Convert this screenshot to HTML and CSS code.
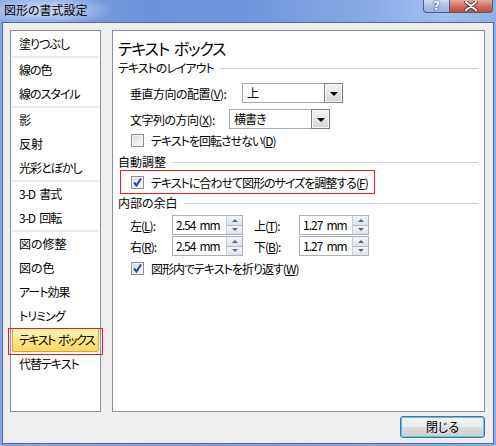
FILE: index.html
```html
<!DOCTYPE html>
<html lang="ja">
<head>
<meta charset="utf-8">
<title>図形の書式設定</title>
<link rel="stylesheet" href="styles.css">
</head>
<body>
<div class="window">
  <div class="titlebar">
    <span class="title">図形の書式設定</span>
    <div class="caption-btns">
      <span class="cb help">?</span>
      <span class="cb close"><svg width="14" height="10" viewBox="0 0 14 10"><path d="M2 1 L12 9 M12 1 L2 9" stroke="#3a2a2a" stroke-width="3.6" stroke-linecap="round"/><path d="M2 1 L12 9 M12 1 L2 9" stroke="#ffffff" stroke-width="2.2" stroke-linecap="round"/></svg></span>
    </div>
  </div>
  <div class="client">
    <ul class="cat-list">
      <li class="item">塗りつぶし</li>
      <li class="sep"></li>
      <li class="item">線の色</li>
      <li class="item">線のスタイル</li>
      <li class="sep"></li>
      <li class="item kanji">影</li>
      <li class="item kanji">反射</li>
      <li class="item">光彩とぼかし</li>
      <li class="sep"></li>
      <li class="item">3-D 書式</li>
      <li class="item">3-D 回転</li>
      <li class="sep"></li>
      <li class="item kanji">図の修整</li>
      <li class="item kanji">図の色</li>
      <li class="item">アート効果</li>
      <li class="item">トリミング</li>
      <li class="item selected">テキスト ボックス</li>
      <li class="item">代替テキスト</li>
    </ul>
    <section class="panel">
      <h1 class="heading">テキスト ボックス</h1>
      <div class="group-title gt1">テキストのレイアウト</div>
      <div class="row row-c1">
        <span class="lbl lbl-v">垂直方向の配置(<u>V</u>):</span>
        <div class="combo"><span class="combo-text">上</span><span class="combo-btn"><i class="tri"></i></span></div>
      </div>
      <div class="row row-c2">
        <span class="lbl lbl-x">文字列の方向(<u>X</u>):</span>
        <div class="combo"><span class="combo-text">横書き</span><span class="combo-btn"><i class="tri"></i></span></div>
      </div>
      <div class="check-row cr1">
        <span class="chk"></span>
        <span>テキストを回転させない(<u>D</u>)</span>
      </div>
      <div class="group-title gt2 kanji">自動調整</div>
      <div class="annot">
        <span class="chk checked"><svg width="11" height="11" viewBox="0 0 11 11"><path d="M2 5.5 L4.5 8.5 L9 1.5" fill="none" stroke="#2348a0" stroke-width="2"/></svg></span>
        <span>テキストに合わせて図形のサイズを調整する(<u>F</u>)</span>
      </div>
      <div class="group-title gt3 kanji">内部の余白</div>
      <div class="row spin-row sr1">
        <span class="lbl lbl-a">左(<u>L</u>):</span>
        <div class="spin s1"><span class="spin-text">2.54 mm</span><span class="spin-btns"><span class="sb up"></span><span class="sb down"></span></span></div>
        <span class="lbl lbl-b">上(<u>T</u>):</span>
        <div class="spin s2"><span class="spin-text">1.27 mm</span><span class="spin-btns"><span class="sb up"></span><span class="sb down"></span></span></div>
      </div>
      <div class="row spin-row sr2">
        <span class="lbl lbl-a">右(<u>R</u>):</span>
        <div class="spin s1"><span class="spin-text">2.54 mm</span><span class="spin-btns"><span class="sb up"></span><span class="sb down"></span></span></div>
        <span class="lbl lbl-b">下(<u>B</u>):</span>
        <div class="spin s2"><span class="spin-text">1.27 mm</span><span class="spin-btns"><span class="sb up"></span><span class="sb down"></span></span></div>
      </div>
      <div class="check-row cr3">
        <span class="chk checked"><svg width="11" height="11" viewBox="0 0 11 11"><path d="M2 5.5 L4.5 8.5 L9 1.5" fill="none" stroke="#2348a0" stroke-width="2"/></svg></span>
        <span>図形内でテキストを折り返す(<u>W</u>)</span>
      </div>
    </section>
    <div class="footer">
      <button class="btn">閉じる</button>
    </div>
  </div>
</div>
</body>
</html>
```
FILE: styles.css
```css
* { box-sizing: border-box; }
html, body { margin: 0; padding: 0; }
body {
  font-family: "Noto Sans CJK JP", "Noto Sans", sans-serif;
  font-size: 12px;
  color: #000;
  font-feature-settings: "palt";
  letter-spacing: -1px;
  word-spacing: 2.5px;
  background: #fff;
}
.kanji { letter-spacing: 0; }
u { text-decoration: underline; text-underline-offset: 1px; }

.window {
  width: 496px;
  height: 446px;
  display: flex;
  flex-direction: column;
  background: linear-gradient(to right, #86a8e6, #7a9ee2 50%, #8cafe9);
}

.titlebar {
  height: 22px;
  flex: none;
  display: flex;
  align-items: flex-start;
  padding: 0 3px 0 4px;
  background:
    radial-gradient(ellipse 70px 16px at 45px 10px, rgba(225,235,252,0.85), rgba(225,235,252,0) 100%),
    linear-gradient(to right, #86a6e4 0%, #6c92da 30%, #6f95dc 50%, #8aabe7 75%, #a3bff0 90%, #8eaee9 100%);
}
.title {
  font-size: 12px;
  line-height: 19px;
  letter-spacing: 0;
  color: #000;
}
.caption-btns {
  margin-left: auto;
  display: flex;
}
.cb {
  height: 13px;
  border: 1px solid #4e5c7a;
  border-top: none;
}
.help {
  width: 26px;
  border-right: none;
  border-radius: 0 0 0 4px;
  background: linear-gradient(#d3def4, #a9bfe7 55%, #98b2e2);
  color: #fff;
  font: bold 12px/12px "DejaVu Sans", sans-serif;
  letter-spacing: 0;
  text-align: center;
  text-shadow: 0 0 2px #203a6a, 0 0 1px #203a6a;
}
.close {
  width: 44px;
  border-radius: 0 0 4px 0;
  background: linear-gradient(#e8ab9e, #d2705f 50%, #c24a38);
  display: flex;
  align-items: center;
  justify-content: center;
}

.client {
  flex: 1;
  margin: 0 2px 2px;
  border: 1px solid #53678c;
  background: #eeeeee;
  padding: 7px 8px 5px 7px;
  display: grid;
  grid-template-columns: 91px 373px;
  grid-template-rows: 382px 22px;
  column-gap: 11px;
  row-gap: 4px;
}

.cat-list {
  list-style: none;
  margin: 0;
  padding: 1px;
  border: 1px solid #8d8ca3;
  background: #fff;
}
.item {
  height: 24px;
  line-height: 24px;
  padding-left: 7px;
  white-space: nowrap;
}
.sep {
  height: 2px;
  background: #ececec;
}
.item.selected {
  position: relative;
  background: linear-gradient(#fff3c2, #ffe58a 45%, #ffd862);
  border: 1px solid #c6a544;
  border-radius: 2px;
  line-height: 22px;
  padding-left: 6px;
  letter-spacing: -1.5px;
  word-spacing: 2px;
}
.item.selected::after {
  content: "";
  position: absolute;
  top: -1px;
  bottom: -4px;
  left: -5px;
  right: -5px;
  border: 1px solid #ea1c1c;
}

.panel {
  border: 1px solid #8d8ca3;
  background: #fff;
  padding: 0 6px 0 5px;
  display: flex;
  flex-direction: column;
  align-items: flex-start;
}
.heading {
  margin: 7px 0 0;
  font-size: 16px;
  font-weight: normal;
  line-height: 20px;
  letter-spacing: -1.2px;
}
.group-title {
  align-self: stretch;
  display: flex;
  align-items: center;
  line-height: 14px;
  height: 14px;
  white-space: nowrap;
}
.group-title::after {
  content: "";
  flex: 1;
  height: 1px;
  background: #c8d2df;
  margin-left: 6px;
}
.gt1 { margin-top: 3px; }
.gt2 { margin-top: 8px; }
.gt3 { margin-top: 2px; }

.row {
  display: flex;
  align-items: center;
  height: 20px;
  padding-left: 12px;
  white-space: nowrap;
}
.row-c1 { margin-top: 8px; }
.row-c2 { margin-top: 6px; }
.lbl { flex: none; }
.lbl-v { width: 112px; letter-spacing: -0.5px; }
.lbl-x { width: 99px; letter-spacing: -0.5px; }

.combo {
  width: 101px;
  height: 20px;
  display: flex;
  border: 1px solid #a5aab5;
  background: #fff;
}
.combo-text {
  flex: 1;
  padding-left: 4px;
  line-height: 18px;
}
.combo-btn {
  width: 19px;
  margin: -1px -1px -1px 0;
  border: 1px solid #7b8091;
  box-shadow: inset 0 0 0 1px #f7f7f7;
  background: linear-gradient(#f4f4f4, #e6e6e6 50%, #d3d3d3);
  display: flex;
  align-items: center;
  justify-content: center;
}
.tri {
  width: 0;
  height: 0;
  border-left: 4px solid transparent;
  border-right: 4px solid transparent;
  border-top: 4px solid #000;
  margin-top: 1px;
}

.check-row {
  display: flex;
  align-items: center;
  height: 14px;
  padding-left: 13px;
  white-space: nowrap;
}
.cr1 { margin-top: 4px; }
.cr3 { margin-top: 5px; }
.chk {
  flex: none;
  width: 13px;
  height: 13px;
  border: 1px solid #8e8f92;
  background: linear-gradient(135deg, #d6d6d6, #eeeeee 60%, #fbfbfb);
  box-shadow: inset 0 0 0 1px #f4f4f4;
  margin-right: 7px;
  display: flex;
  align-items: center;
  justify-content: center;
}

.annot {
  margin: 1px 0 0 2px;
  width: 255px;
  height: 24px;
  border: 1px solid #e8201f;
  padding-left: 10px;
  display: flex;
  align-items: center;
  white-space: nowrap;
}

.sr1 { margin-top: 5px; }
.sr2 { margin-top: 1px; }
.lbl-a { width: 42px; }
.lbl-b { width: 45px; margin-left: 11px; }
.spin {
  height: 20px;
  display: flex;
  border: 1px solid #abb0b8;
  background: #fff;
}
.s1 { width: 71px; }
.s2 { width: 70px; }
.spin-text {
  flex: 1;
  padding-left: 3px;
  line-height: 18px;
}
.spin-btns {
  width: 16px;
  display: flex;
  flex-direction: column;
  border-left: 1px solid #c9cdd3;
}
.sb {
  flex: 1;
  display: flex;
  align-items: center;
  justify-content: center;
  background: linear-gradient(#f3f5f8, #dde2ea);
}
.sb.up { border-bottom: 1px solid #b4bac4; }
.sb.up::before {
  content: "";
  border-left: 3px solid transparent;
  border-right: 3px solid transparent;
  border-bottom: 3px solid #56698f;
}
.sb.down::before {
  content: "";
  border-left: 3px solid transparent;
  border-right: 3px solid transparent;
  border-top: 3px solid #56698f;
}

.footer {
  grid-column: 1 / -1;
  display: flex;
  justify-content: flex-end;
}
.btn {
  width: 85px;
  height: 22px;
  padding: 0;
  border: 1px solid #3a78aa;
  border-radius: 3px;
  background: linear-gradient(#f3f3f3, #ececec 50%, #dcdcdc 51%, #cfcfcf);
  box-shadow: inset 0 0 0 1px #5cc2f0;
  font: 12px/20px "Noto Sans CJK JP", sans-serif;
  font-feature-settings: "palt";
  letter-spacing: 0;
  word-spacing: 0;
  color: #000;
}
```
